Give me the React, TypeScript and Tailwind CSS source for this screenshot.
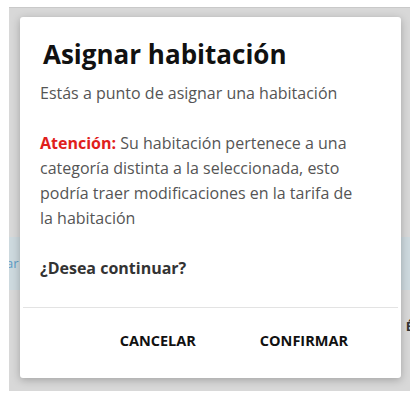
export default function App() {
  return (
    <div className="w-[419px] h-[401px] bg-white pt-[7px] pl-[9px] font-['Open_Sans',sans-serif]">
      {/* page behind the backdrop */}
      <div className="relative w-[401px] h-[384px] bg-[#d8d8d8] border-t border-[#c9c9c9] overflow-hidden">
        <div className="h-[229px]" />
        <div className="h-[53px] bg-[#cdd9de] flex items-center justify-between">
          <span className="text-[13px] text-[#5d9cc6] -ml-[3px] leading-none">ar</span>
        </div>
        <div className="absolute right-[-3px] top-[312px] text-[13px] font-bold text-[#333] leading-none">É</div>

        {/* dialog */}
        <div className="absolute left-[11px] top-[9px] w-[381px] h-[361px] bg-white rounded-[3px] shadow-[0_2px_8px_rgba(0,0,0,0.25)] flex flex-col">
          <div className="pl-[20px] pt-[22px] w-[343px]">
            <h2 className="text-[26px] font-bold text-[#111] leading-[30px] pl-[3px] whitespace-nowrap">Asignar habitación</h2>
            <p className="mt-[12px] text-[16px] text-[#555] leading-[25px] whitespace-nowrap">Estás a punto de asignar una habitación</p>
            <p className="mt-[25px] text-[16px] text-[#555] leading-[25px]">
              <span className="font-bold text-[#e0201b]">Atención:</span> Su habitación pertenece a una categoría distinta a la seleccionada, esto podría traer modificaciones en la tarifa de la habitación
            </p>
            <p className="mt-[25px] text-[16px] font-bold text-[#333] leading-[25px]">¿Desea continuar?</p>
          </div>
          <div className="mt-[26px] mx-[3px] border-t border-[#e3e3e3]" />
          <div className="flex justify-end gap-[64px] pr-[53px] pt-[20px]">
            <button className="text-[14.5px] font-bold text-[#111] leading-[26px]">CANCELAR</button>
            <button className="text-[14.5px] font-bold text-[#111] leading-[26px]">CONFIRMAR</button>
          </div>
        </div>
      </div>
    </div>
  );
}
